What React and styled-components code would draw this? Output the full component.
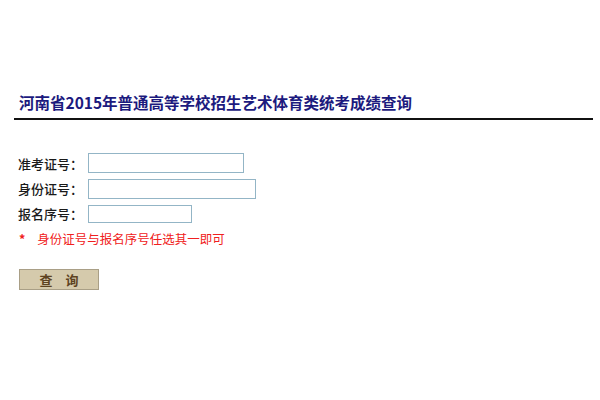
import React from 'react'
import styled, { createGlobalStyle } from 'styled-components'

const GlobalStyle = createGlobalStyle`
  html, body {
    margin: 0;
    padding: 0;
    background: #fff;
    font-family: "Noto Sans CJK SC", "Liberation Sans", sans-serif;
  }
`

const Page = styled.div`
  width: 600px;
  height: 400px;
  overflow: hidden;
`

const Title = styled.h1`
  margin: 92px 7px 0 14px;
  padding: 0 0 6px 5px;
  font-size: 15.5px;
  line-height: 20px;
  font-weight: bold;
  color: #1c1a7e;
  border-bottom: 2px solid #111;
`

const Form = styled.form`
  margin: 33px 0 0 18px;
  display: flex;
  flex-direction: column;
  gap: 5.5px;
`

const Row = styled.div`
  display: flex;
  align-items: center;
`

const Label = styled.label`
  width: 70px;
  font-size: 13px;
  color: #1a1a1a;
  font-weight: 500;
`

const Field = styled.input`
  box-sizing: border-box;
  width: ${({ w }) => w}px;
  height: ${({ h }) => h || 20}px;
  margin: 0;
  padding: 0 3px;
  border: 1px solid #93b5c6;
  background: #fff;
  outline: none;
`

const Note = styled.p`
  margin: 2px 0 0 0;
  font-size: 12.5px;
  line-height: 16px;
  color: #f02020;
  display: flex;
  gap: 12px;
`

const Star = styled.span`
  padding-left: 1px;
  font-weight: bold;
`

const Button = styled.button`
  box-sizing: border-box;
  margin: 17px 0 0 1px;
  width: 80px;
  height: 21px;
  padding: 0;
  border: 1px solid #a99f86;
  background: #d5caac;
  color: #5e4322;
  font-family: inherit;
  font-size: 13px;
  font-weight: bold;
  cursor: pointer;
  align-self: flex-start;
`

export default function App() {
  return (
    <Page>
      <GlobalStyle />
      <Title>河南省2015年普通高等学校招生艺术体育类统考成绩查询</Title>
      <Form onSubmit={(e) => e.preventDefault()}>
        <Row>
          <Label>准考证号：</Label>
          <Field w={156} />
        </Row>
        <Row>
          <Label>身份证号：</Label>
          <Field w={168} />
        </Row>
        <Row>
          <Label>报名序号：</Label>
          <Field w={104} h={18} />
        </Row>
        <Note>
          <Star>*</Star>
          <span>身份证号与报名序号任选其一即可</span>
        </Note>
        <Button type="submit">查　询</Button>
      </Form>
    </Page>
  )
}
